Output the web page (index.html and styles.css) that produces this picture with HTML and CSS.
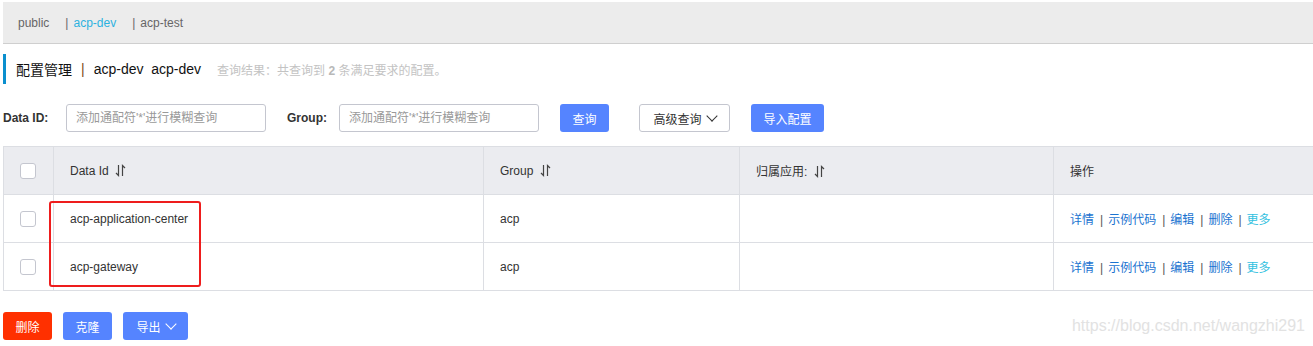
FILE: index.html
```html
<!DOCTYPE html>
<html lang="zh-CN">
<head>
    <meta charset="UTF-8">
    <title>配置管理</title>
    <link rel="stylesheet" href="styles.css">
</head>
<body>
    <div class="page">
        <div class="tabs">
            <span class="tab">public</span>
            <span class="tab"><span class="sep">|</span><span class="active">acp-dev</span></span>
            <span class="tab"><span class="sep">|</span>acp-test</span>
        </div>

        <div class="title">
            <span class="title-main">配置管理</span>
            <span class="title-sep">|</span>
            <span class="title-ns">acp-dev&nbsp;&nbsp;acp-dev</span>
            <span class="title-info">查询结果：共查询到 <b>2</b> 条满足要求的配置。</span>
        </div>

        <div class="search">
            <label class="search-label">Data ID:</label>
            <input class="search-input" type="text" placeholder="添加通配符'*'进行模糊查询">
            <label class="search-label group-label">Group:</label>
            <input class="search-input" type="text" placeholder="添加通配符'*'进行模糊查询">
            <button class="btn btn-primary btn-query">查询</button>
            <button class="btn btn-normal btn-adv">高级查询 <span class="caret"></span></button>
            <button class="btn btn-primary btn-import">导入配置</button>
        </div>

        <div class="table-wrap">
            <table class="config-table">
                <colgroup>
                    <col style="width: 50px">
                    <col style="width: 430px">
                    <col style="width: 256px">
                    <col style="width: 314px">
                    <col style="width: 262px">
                </colgroup>
                <thead>
                    <tr>
                        <th class="check-cell"><span class="checkbox"></span></th>
                        <th>Data Id <svg class="sort" width="11" height="13" viewBox="0 0 11 13"><path d="M3.5 1V11.5L1 9M7.5 12V1.5L10 4" fill="none" stroke="#444" stroke-width="1.2"/></svg></th>
                        <th>Group <svg class="sort" width="11" height="13" viewBox="0 0 11 13"><path d="M3.5 1V11.5L1 9M7.5 12V1.5L10 4" fill="none" stroke="#444" stroke-width="1.2"/></svg></th>
                        <th>归属应用: <svg class="sort" width="11" height="13" viewBox="0 0 11 13"><path d="M3.5 1V11.5L1 9M7.5 12V1.5L10 4" fill="none" stroke="#444" stroke-width="1.2"/></svg></th>
                        <th>操作</th>
                    </tr>
                </thead>
                <tbody>
                    <tr>
                        <td class="check-cell"><span class="checkbox"></span></td>
                        <td>acp-application-center</td>
                        <td>acp</td>
                        <td></td>
                        <td class="ops">
                            <a>详情</a><span class="op-sep">|</span><a>示例代码</a><span class="op-sep">|</span><a>编辑</a><span class="op-sep">|</span><a>删除</a><span class="op-sep">|</span><a class="more">更多</a>
                        </td>
                    </tr>
                    <tr>
                        <td class="check-cell"><span class="checkbox"></span></td>
                        <td>acp-gateway</td>
                        <td>acp</td>
                        <td></td>
                        <td class="ops">
                            <a>详情</a><span class="op-sep">|</span><a>示例代码</a><span class="op-sep">|</span><a>编辑</a><span class="op-sep">|</span><a>删除</a><span class="op-sep">|</span><a class="more">更多</a>
                        </td>
                    </tr>
                </tbody>
            </table>
            <div class="mark-box"></div>
        </div>

        <div class="batch">
            <button class="btn btn-danger">删除</button>
            <button class="btn btn-primary">克隆</button>
            <button class="btn btn-primary btn-export">导出 <span class="caret caret-white"></span></button>
            <span class="watermark">https://blog.csdn.net/wangzhi291</span>
        </div>
    </div>
</body>
</html>
```

FILE: styles.css
```css
body {
    margin: 0;
    padding: 0;
    background-color: #fff;
    font-family: "Liberation Sans", "Noto Sans CJK SC", sans-serif;
    font-size: 12px;
    color: #333;
    overflow: hidden;
}
.page {
    padding: 2px 0 0 3px;
}
.tabs {
    display: flex;
    align-items: center;
    height: 41px;
    background-color: #ececec;
    border-bottom: 1px solid #cfcfcf;
    padding-left: 15px;
    color: #666;
}
.tab {
    margin-right: 16px;
}
.sep {
    color: #666;
    margin-right: 5px;
}
.active {
    color: #2cb2e0;
}
.title {
    display: flex;
    align-items: center;
    height: 30px;
    margin-top: 10px;
    border-left: 3px solid #0a8fce;
    padding-left: 10px;
    font-size: 14px;
    color: #111;
}
.title-sep {
    margin: 0 9px;
    color: #7a4a1c;
}
.title-info {
    margin-left: 16px;
    font-size: 12px;
    color: #c3c3c3;
}
.title-info b {
    color: #b8b8b8;
}
.search {
    display: flex;
    align-items: center;
    margin-top: 20px;
}
.search-label {
    font-weight: bold;
    color: #333;
    width: 63px;
}
.group-label {
    width: auto;
    margin-left: 21px;
    margin-right: 12px;
}
.search-input {
    width: 200px;
    height: 28px;
    box-sizing: border-box;
    border: 1px solid #c4c6cf;
    border-radius: 3px;
    padding: 0 9px;
    font-family: inherit;
    font-size: 12px;
    outline: none;
}
.search-input::placeholder {
    color: #999;
}
.btn {
    height: 28px;
    box-sizing: border-box;
    border: none;
    border-radius: 3px;
    padding: 0 12px;
    font-family: inherit;
    font-size: 12px;
    cursor: pointer;
    display: inline-flex;
    align-items: center;
    justify-content: center;
}
.btn-primary {
    background-color: #5584ff;
    color: #fff;
}
.btn-normal {
    background-color: #fff;
    color: #333;
    border: 1px solid #c4c6cf;
}
.btn-danger {
    background-color: #ff3000;
    color: #fff;
}
.btn-query {
    margin-left: 21px;
    width: 49px;
}
.btn-adv {
    margin-left: 30px;
    width: 91px;
}
.btn-import {
    margin-left: 21px;
    width: 73px;
}
.caret {
    display: inline-block;
    width: 7px;
    height: 7px;
    border-right: 1px solid #333;
    border-bottom: 1px solid #333;
    transform: rotate(45deg);
    margin: -4px 0 0 6px;
}
.caret-white {
    border-color: #fff;
}
.table-wrap {
    position: relative;
    margin-top: 14px;
}
.config-table {
    table-layout: fixed;
    border-collapse: collapse;
    width: 1312px;
}
.config-table th,
.config-table td {
    height: 48px;
    box-sizing: border-box;
    border: 1px solid #dcdee3;
    padding: 0 16px;
    text-align: left;
    font-weight: normal;
    color: #333;
}
.config-table th {
    background-color: #ebecf0;
}
.config-table .check-cell {
    padding: 0 0 0 16px;
}
.checkbox {
    display: block;
    width: 14px;
    height: 14px;
    border: 1px solid #c4c6cf;
    border-radius: 3px;
    background-color: #fff;
}
.sort {
    margin-left: 3px;
    vertical-align: -2px;
}
.ops a {
    color: #1a73d0;
}
.ops a.more {
    color: #33c1e0;
}
.op-sep {
    margin: 0 5px 0 6px;
    color: #555;
}
.mark-box {
    position: absolute;
    left: 46px;
    top: 55px;
    width: 152px;
    height: 86px;
    box-sizing: border-box;
    border: 2px solid #ee1d1d;
    border-radius: 3px;
}
.batch {
    display: flex;
    align-items: center;
    gap: 11px;
    margin-top: 21px;
}
.batch .btn {
    width: 49px;
}
.batch .btn-export {
    width: 65px;
}
.watermark {
    margin-left: auto;
    margin-right: 8px;
    font-family: "Liberation Sans", sans-serif;
    font-size: 16px;
    color: #e2e2e2;
}
```
